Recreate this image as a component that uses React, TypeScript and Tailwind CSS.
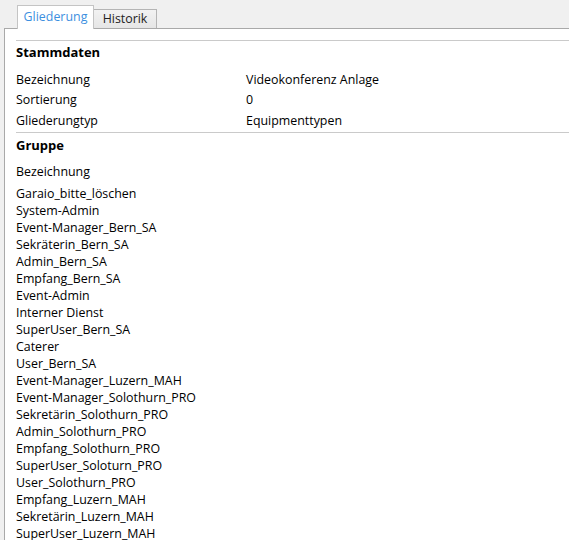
import React from 'react';

const groups = [
  'Garaio_bitte_löschen',
  'System-Admin',
  'Event-Manager_Bern_SA',
  'Sekräterin_Bern_SA',
  'Admin_Bern_SA',
  'Empfang_Bern_SA',
  'Event-Admin',
  'Interner Dienst',
  'SuperUser_Bern_SA',
  'Caterer',
  'User_Bern_SA',
  'Event-Manager_Luzern_MAH',
  'Event-Manager_Solothurn_PRO',
  'Sekretärin_Solothurn_PRO',
  'Admin_Solothurn_PRO',
  'Empfang_Solothurn_PRO',
  'SuperUser_Soloturn_PRO',
  'User_Solothurn_PRO',
  'Empfang_Luzern_MAH',
  'Sekretärin_Luzern_MAH',
  'SuperUser_Luzern_MAH',
];

const stammdaten = [
  { label: 'Bezeichnung', value: 'Videokonferenz Anlage' },
  { label: 'Sortierung', value: '0' },
  { label: 'Gliederungtyp', value: 'Equipmenttypen' },
];

const App = () => {
  return (
    <div className="w-[569px] h-[540px] overflow-hidden bg-[#f0f0f0] flex flex-col text-[12.4px] text-black font-['Open_Sans',sans-serif]">
      {/* Tabs */}
      <div className="h-[28px] flex items-end pl-[17px] shrink-0">
        <div className="w-[77px] h-[24px] flex items-center justify-center bg-white border border-b-0 border-[#c4c4c4] text-[#3c8fe0] -mb-px relative z-10">
          Gliederung
        </div>
        <div className="w-[63px] h-[19px] flex items-center justify-center bg-gradient-to-b from-[#f2f2f2] to-[#e6e6e6] border border-b-0 border-l-0 border-[#b4b4b4] text-[#222]">
          Historik
        </div>
      </div>

      {/* Panel */}
      <div className="ml-[4px] flex-1 bg-white border-l border-t border-[#a9a9a9] pl-[11px]">
        <div className="mt-[11px] border-t border-[#cacaca]">
          <div className="h-[24px] flex items-center font-bold text-[13px]">Stammdaten</div>
          <div className="pt-[5px]">
            {stammdaten.map((row) => (
              <div key={row.label} className="h-[20.5px] flex items-center">
                <span className="w-[230px]">{row.label}</span>
                <span>{row.value}</span>
              </div>
            ))}
          </div>
        </div>
        <div className="border-t border-[#cacaca]">
          <div className="h-[26px] flex items-center font-bold text-[13px]">Gruppe</div>
          <div className="h-[27px] flex items-center">Bezeichnung</div>
          <div>
            {groups.map((g) => (
              <div key={g} className="h-[17px] flex items-center whitespace-nowrap">
                {g}
              </div>
            ))}
          </div>
        </div>
      </div>
    </div>
  );
};

export default App;
